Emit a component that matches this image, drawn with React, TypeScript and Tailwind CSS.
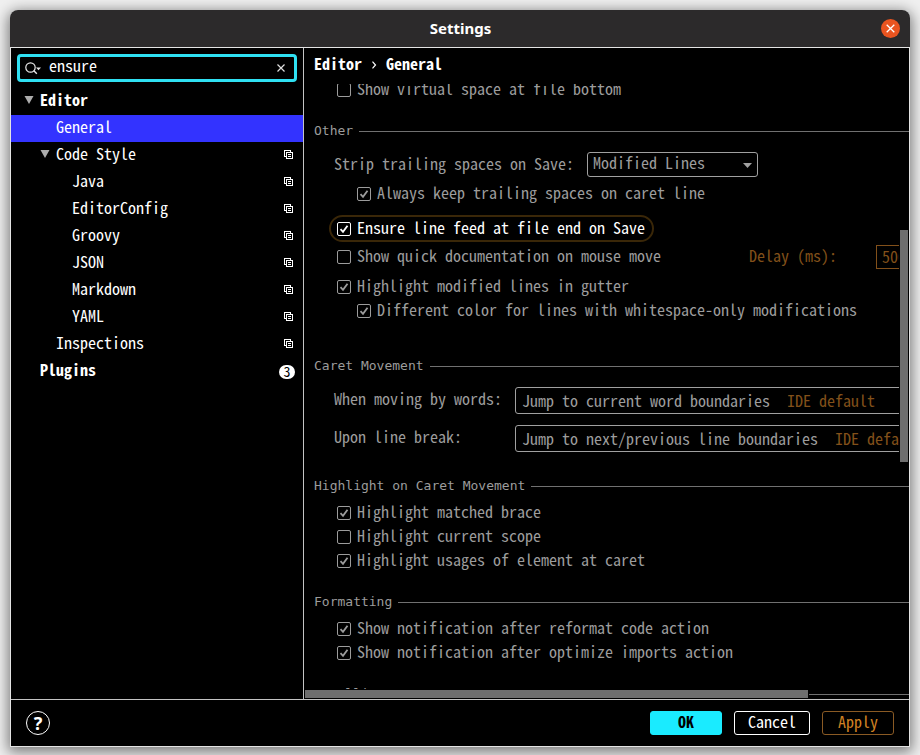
import React from "react";

type TreeItem = {
  label: string;
  indent: string;
  expanded?: boolean;
  strong?: boolean;
  selected?: boolean;
  scoped?: boolean;
  badge?: number;
};

const tree: TreeItem[] = [
  { label: "Editor", indent: "pl-[13px]", expanded: true, strong: true },
  { label: "General", indent: "pl-[29px]", selected: true },
  { label: "Code Style", indent: "pl-[29px]", expanded: true, scoped: true },
  { label: "Java", indent: "pl-[45px]", scoped: true },
  { label: "EditorConfig", indent: "pl-[45px]", scoped: true },
  { label: "Groovy", indent: "pl-[45px]", scoped: true },
  { label: "JSON", indent: "pl-[45px]", scoped: true },
  { label: "Markdown", indent: "pl-[45px]", scoped: true },
  { label: "YAML", indent: "pl-[45px]", scoped: true },
  { label: "Inspections", indent: "pl-[29px]", scoped: true },
  { label: "Plugins", indent: "pl-[13px]", strong: true, badge: 3 },
];

function ScopeIcon() {
  return (
    <svg width="9" height="9" viewBox="0 0 9 9" fill="none" stroke="#fff" shapeRendering="crispEdges" aria-hidden="true">
      <path d="M2 6.5H0.5V0.5H6.5V2" />
      <path d="M2.5 2.5H8.5V8.5H2.5Z" />
      <path d="M4 4.5H7M4 6.5H7" />
    </svg>
  );
}

function TreeRow({ item }: { item: TreeItem }) {
  return (
    <li role="treeitem" aria-selected={!!item.selected} aria-expanded={item.expanded}>
      <button
        type="button"
        className={`flex h-[27px] w-full items-center pr-2 text-left ${item.indent} ${
          item.selected ? "bg-[#3333ff]" : ""
        } ${item.strong ? "font-bold" : ""}`}
      >
        <span className="flex w-4 shrink-0 pb-[3px]">
          {item.expanded && (
            <svg width="10" height="8" viewBox="0 0 10 8" fill="#adadad" aria-hidden="true">
              <path d="M0.5 0H9.5L5 8Z" />
            </svg>
          )}
        </span>
        <span className="flex-1 truncate pb-[5px]">{item.label}</span>
        {item.scoped && (
          <span className="mr-[2px] pb-[2px]">
            <ScopeIcon />
          </span>
        )}
        {item.badge !== undefined && (
          <span className="flex h-[14px] w-4 items-center justify-center rounded-full bg-white pb-[2px] text-sm font-normal text-black">
            {item.badge}
          </span>
        )}
      </button>
    </li>
  );
}

function Check({
  label,
  checked = false,
  className = "",
  bright = false,
}: {
  label: string;
  checked?: boolean;
  className?: string;
  bright?: boolean;
}) {
  return (
    <label className={`flex h-6 shrink-0 items-center gap-[6px] ${bright ? "text-white" : ""} ${className}`}>
      <span className="relative flex">
        <input
          type="checkbox"
          defaultChecked={checked}
          className="peer h-[14px] w-[14px] appearance-none rounded-[2px] border border-current"
        />
        <svg
          className="pointer-events-none absolute inset-0 hidden peer-checked:block"
          width="14"
          height="14"
          viewBox="0 0 14 14"
          fill="none"
          stroke="currentColor"
          strokeWidth="1.8"
          aria-hidden="true"
        >
          <path d="M3.5 7.2L6 9.8L10.5 3.8" />
        </svg>
      </span>
      <span className="pb-1">{label}</span>
    </label>
  );
}

function SectionTitle({ title, className }: { title: string; className: string }) {
  return (
    <h2
      className={`flex h-6 shrink-0 items-center gap-[6px] pl-[10px] font-['DejaVu_Sans_Mono',monospace] text-[13px] ${className}`}
    >
      <span className="pt-[2px]">{title}</span>
      <span className="mt-[2px] h-px flex-1 bg-[#707070]" />
    </h2>
  );
}

function CaretSelect({ id, label, value, className }: { id: string; label: string; value: string; className: string }) {
  return (
    <div className={`flex shrink-0 pl-[30px] ${className}`}>
      <label htmlFor={id} className="w-[181px] shrink-0 leading-[22px]">
        {label}
      </label>
      <div className="flex h-[27px] w-[440px] shrink-0 items-center gap-4 rounded-[3px] border border-[#a0a0a0] px-[6px] pb-[2px]">
        <select id={id} className="appearance-none bg-transparent">
          <option>{value}</option>
        </select>
        <span className="text-[#82501a]">IDE default</span>
      </div>
    </div>
  );
}

export default function App() {
  return (
    <div className="flex h-screen flex-col bg-[#f0f0f0] px-[10px] pt-[10px] pb-2 font-['Noto_Sans_Mono_CJK_JP','Noto_Sans_Mono',monospace] text-base leading-6 text-white">
      <div className="flex min-h-0 flex-1 flex-col rounded-t-lg shadow-[0_3px_14px_2px_rgba(0,0,0,0.5)]">
        <header className="flex h-[37px] shrink-0 items-center rounded-t-lg bg-[#2c2a2b] px-[10px]">
          <span className="w-5" />
          <h1 className="flex-1 pb-[2px] text-center font-['Noto_Sans',sans-serif] text-[15px] font-bold">Settings</h1>
          <button
            type="button"
            aria-label="Close"
            className="flex h-[19px] w-[19px] items-center justify-center rounded-full bg-[#e95420]"
          >
            <svg width="9" height="9" viewBox="0 0 9 9" stroke="#fff" strokeWidth="1.3" aria-hidden="true">
              <path d="M0.7 0.7L8.3 8.3M8.3 0.7L0.7 8.3" />
            </svg>
          </button>
        </header>

        <div className="flex min-h-0 flex-1 flex-col border border-[#e4e4e4] bg-black">
          <div className="flex min-h-0 flex-1">
            <aside className="flex w-[293px] shrink-0 flex-col border-r border-[#c4c4c4] pt-[6px]">
              <div className="mx-[6px] mb-[6px] flex h-7 items-center rounded border-[3px] border-[#2fe0f2] pr-2 pl-[5px]">
                <svg width="17" height="13" viewBox="0 0 17 13" fill="none" stroke="#e8e8e8" aria-hidden="true">
                  <circle cx="5.5" cy="5.5" r="4.7" strokeWidth="1.2" />
                  <path d="M8.8 8.8L11.8 11.8" strokeWidth="1.4" />
                  <path d="M11 5.5H16L13.5 8.3Z" fill="#e8e8e8" stroke="none" />
                </svg>
                <input
                  type="text"
                  aria-label="Search settings"
                  defaultValue="ensure"
                  className="ml-[7px] h-[22px] min-w-0 flex-1 bg-transparent pb-[6px] outline-none"
                />
                <button type="button" aria-label="Clear search" className="p-px">
                  <svg width="8" height="8" viewBox="0 0 8 8" stroke="#e0e0e0" strokeWidth="1.2" aria-hidden="true">
                    <path d="M0.5 0.5L7.5 7.5M7.5 0.5L0.5 7.5" />
                  </svg>
                </button>
              </div>
              <ul role="tree" aria-label="Settings categories">
                {tree.map((item) => (
                  <TreeRow key={item.label} item={item} />
                ))}
              </ul>
            </aside>

            <main className="flex min-w-0 flex-1 flex-col whitespace-nowrap text-[#9c9c9c]">
              <nav
                aria-label="Breadcrumb"
                className="flex h-9 shrink-0 items-center gap-[9px] pl-[10px] pb-[7px] font-bold text-white"
              >
                <span>Editor</span>
                <svg
                  className="mt-[5px]"
                  width="6"
                  height="8"
                  viewBox="0 0 6 8"
                  fill="none"
                  stroke="#fff"
                  strokeWidth="1.2"
                  aria-hidden="true"
                >
                  <path d="M1.5 0.7L4.5 4L1.5 7.3" />
                </svg>
                <span>General</span>
              </nav>

              <div className="relative min-h-0 flex-1 overflow-hidden">
                <div className="-mt-[6px] flex flex-col">
                  <Check className="pl-[33px]" label="Show virtual space at file bottom" />

                  <SectionTitle className="mt-4" title="Other" />
                  <div className="mt-[10px] flex h-[25px] shrink-0 items-center pl-[30px]">
                    <label htmlFor="strip" className="pb-1">
                      Strip trailing spaces on Save:
                    </label>
                    <div className="relative ml-[13px] flex">
                      <select
                        id="strip"
                        className="h-[25px] w-[171px] appearance-none rounded-[3px] border border-[#a0a0a0] bg-black px-[5px] pb-1 leading-[19px]"
                      >
                        <option>Modified Lines</option>
                        <option>All</option>
                        <option>None</option>
                      </select>
                      <svg
                        className="pointer-events-none absolute top-[11px] right-[6px]"
                        width="9"
                        height="5"
                        viewBox="0 0 9 5"
                        fill="#a0a0a0"
                        aria-hidden="true"
                      >
                        <path d="M0 0H9L4.5 5Z" />
                      </svg>
                    </div>
                  </div>
                  <Check className="mt-[5px] pl-[53px]" checked label="Always keep trailing spaces on caret line" />
                  <div className="mt-[9px] flex shrink-0 pl-[25px]">
                    <div className="flex h-[27px] items-center rounded-full border-2 border-[#3a2708] pr-[7px] pl-[6px]">
                      <Check bright checked label="Ensure line feed at file end on Save" />
                    </div>
                  </div>
                  <div className="mt-[3px] flex h-6 shrink-0 items-center pl-[33px]">
                    <Check label="Show quick documentation on mouse move" />
                    <label htmlFor="delay" className="ml-[88px] pb-1 text-[#82501a]">
                      Delay (ms):
                    </label>
                    <input
                      id="delay"
                      type="text"
                      disabled
                      defaultValue="500"
                      className="ml-[39px] h-6 w-[60px] shrink-0 border border-[#82501a] px-[5px] pb-[3px] text-[#82501a]"
                    />
                  </div>
                  <Check className="mt-[6px] pl-[33px]" checked label="Highlight modified lines in gutter" />
                  <Check
                    className="pl-[53px]"
                    checked
                    label="Different color for lines with whitespace-only modifications"
                  />

                  <SectionTitle className="mt-[30px]" title="Caret Movement" />
                  <CaretSelect
                    className="mt-[10px]"
                    id="words"
                    label="When moving by words:"
                    value="Jump to current word boundaries"
                  />
                  <CaretSelect
                    className="mt-[11px]"
                    id="linebreak"
                    label="Upon line break:"
                    value="Jump to next/previous line boundaries"
                  />

                  <SectionTitle className="mt-[21px]" title="Highlight on Caret Movement" />
                  <div className="mt-1 flex flex-col pl-[33px]">
                    <Check checked label="Highlight matched brace" />
                    <Check label="Highlight current scope" />
                    <Check checked label="Highlight usages of element at caret" />
                  </div>

                  <SectionTitle className="mt-4" title="Formatting" />
                  <div className="mt-1 flex flex-col pl-[33px]">
                    <Check checked label="Show notification after reformat code action" />
                    <Check checked label="Show notification after optimize imports action" />
                  </div>

                  <SectionTitle className="mt-4" title="Scrolling" />
                </div>

                <div className="absolute top-[146px] right-0 h-[232px] w-[10px] border-x border-black bg-[#6e6e6e]" />
                <div className="absolute bottom-0 left-0 h-[10px] w-[505px] border border-black bg-[#6e6e6e]" />
              </div>
            </main>
          </div>

          <footer className="flex h-[47px] shrink-0 items-center border-t border-[#c4c4c4] px-[15px]">
            <button
              type="button"
              aria-label="Help"
              className="flex h-6 w-6 items-center justify-center rounded-full border border-white font-['Noto_Sans',sans-serif] text-lg font-bold"
            >
              ?
            </button>
            <div className="ml-auto flex gap-3">
              <button
                type="button"
                className="h-6 w-[72px] rounded-[3px] border border-[#1aebff] bg-[#1aebff] pb-[3px] leading-[19px] font-bold text-black"
              >
                OK
              </button>
              <button type="button" className="h-6 w-[76px] rounded-[3px] border border-white pb-[3px] leading-[19px]">
                Cancel
              </button>
              <button
                type="button"
                disabled
                className="h-6 w-[72px] rounded-[3px] border border-[#8a5a24] pb-[3px] leading-[19px] text-[#d18023]"
              >
                Apply
              </button>
            </div>
          </footer>
        </div>
      </div>
    </div>
  );
}
